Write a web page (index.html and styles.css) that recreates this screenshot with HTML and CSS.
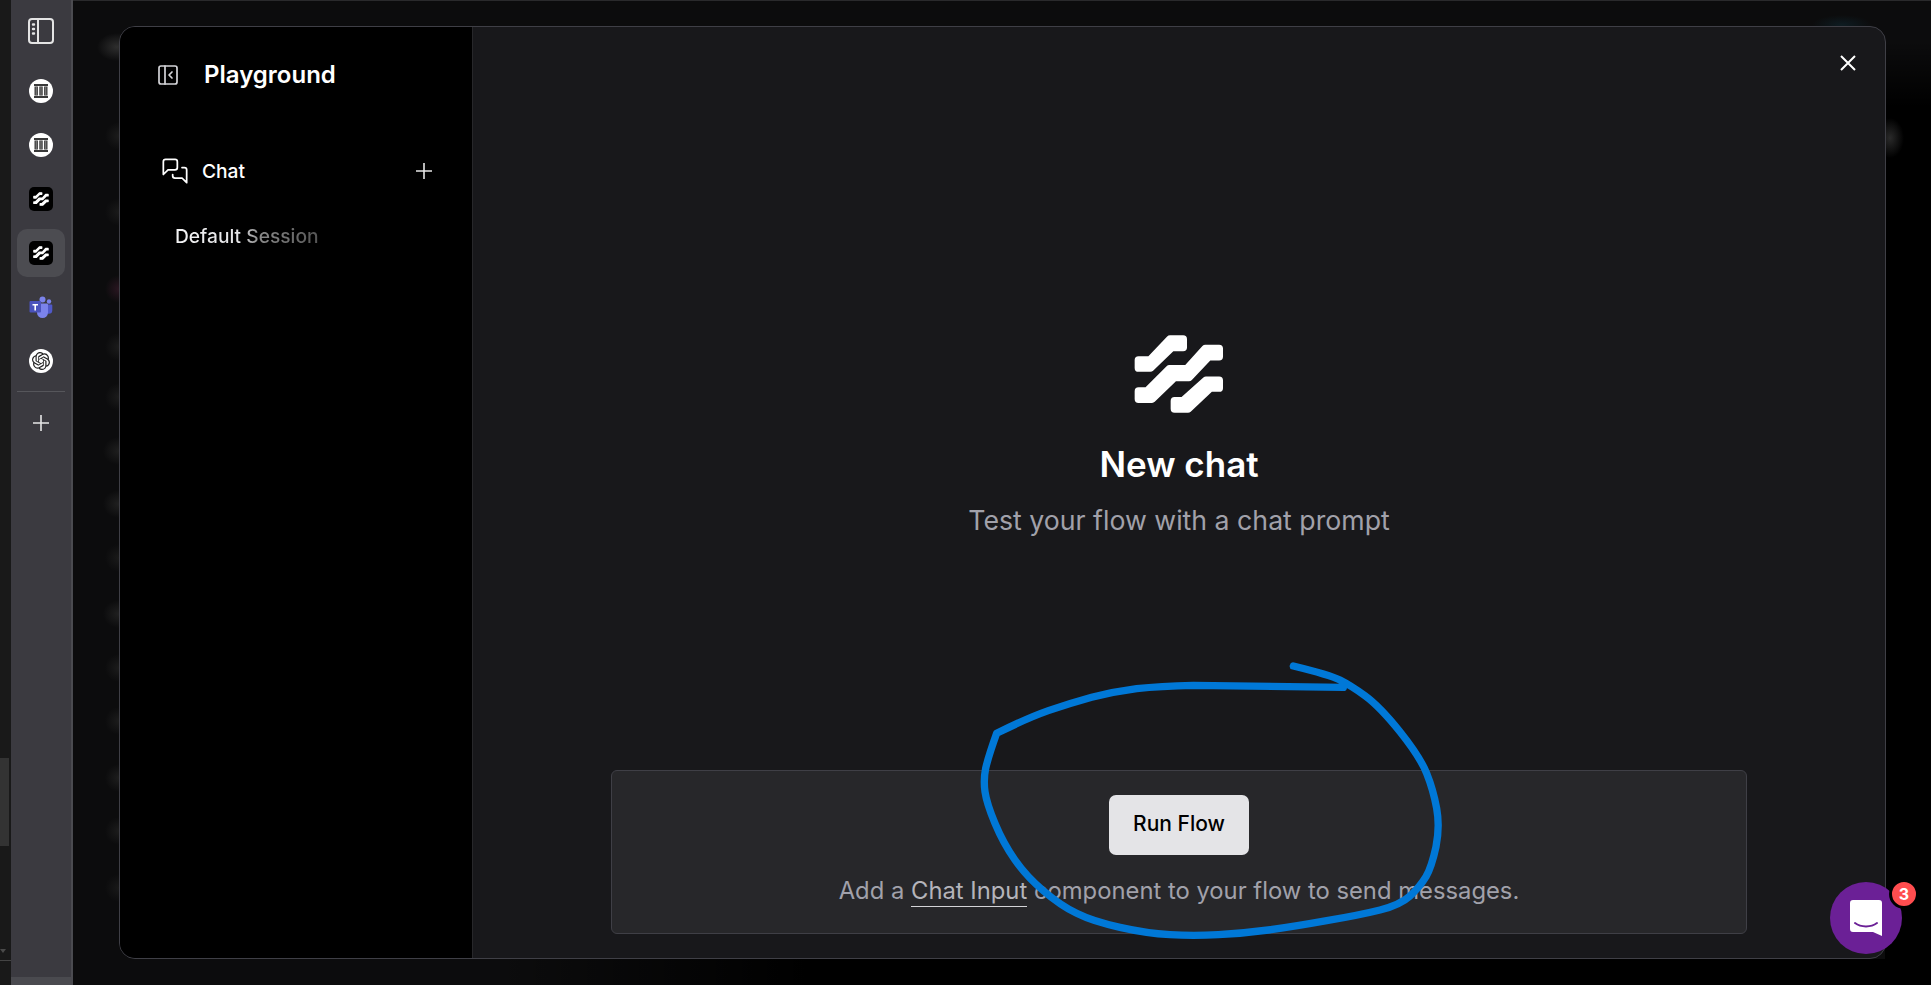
FILE: index.html
```html
<!DOCTYPE html>
<html lang="en">
<head>
<meta charset="utf-8">
<title>Playground</title>
<link rel="stylesheet" href="styles.css">
</head>
<body>
<svg class="defs" width="0" height="0" aria-hidden="true">
  <symbol id="lf" viewBox="160 70 275 243">
    <g fill="currentColor" stroke="currentColor" stroke-width="24" stroke-linejoin="round">
      <polygon points="174,149 209,149 270,85 310,85 310,110 275,110 210,173 174,173"/>
      <polygon points="174,244 200,244 268,176 322,176 378,114 420,114 420,138 388,138 328,202 283,202 215,268 174,268"/>
      <polygon points="284,274 310,274 380,211 420,211 420,234 393,234 325,298 284,298"/>
    </g>
  </symbol>
  <symbol id="cols" viewBox="0 0 24 24">
    <circle cx="12" cy="12" r="12" fill="#fff"/>
    <path fill="#3a3a3a" d="M5 5h14v2H5zM5 17h14v2H5zM5.500 7.500h3.400v9H5.500zM10.300 7.500h3.400v9h-3.400zM15.100 7.500h3.400v9h-3.400z"/>
    <path fill="#9a9a9a" d="M6.800 7.500h.8v9h-.8zM11.600 7.500h.8v9h-.8zM16.400 7.500h.8v9h-.8z"/>
  </symbol>
</svg>

<div class="app">
  <div class="edge">
    <div class="edge-thumb"></div>
    <div class="edge-arrow"></div>
    <div class="edge-line"></div>
  </div>

  <nav class="rail">
    <div class="rail-item rail-toggle">
      <svg class="ic-26" viewBox="0 0 26 26" fill="none" stroke="#e4e4e4" stroke-width="2"><rect x="1" y="1" width="24" height="24" rx="3"/><path d="M10 1v24"/><path stroke-width="2.400" stroke-linecap="round" d="M5 6.500h1M5 11h1M5 15.500h1"/></svg>
    </div>
    <div class="rail-item"><svg class="ic-24"><use href="#cols"/></svg></div>
    <div class="rail-item"><svg class="ic-24"><use href="#cols"/></svg></div>
    <div class="rail-item"><span class="lf-tile"><svg class="lf-mini"><use href="#lf"/></svg></span></div>
    <div class="rail-item rail-item-active"><span class="lf-tile"><svg class="lf-mini"><use href="#lf"/></svg></span></div>
    <div class="rail-item">
      <svg class="ic-24" viewBox="0 0 24 24">
        <circle cx="20" cy="6.500" r="2.200" fill="#7b83eb"/>
        <path fill="#5059c9" d="M16 9.500h6.500a.8.800 0 0 1 .8.800v5a3.500 3.500 0 0 1-3.500 3.500h-3.800z"/>
        <circle cx="13.500" cy="4.500" r="3" fill="#7b83eb"/>
        <path fill="#7b83eb" d="M8 8.500h10a1 1 0 0 1 1 1v8a5.500 5.500 0 0 1-11 0z"/>
        <rect x="0.500" y="6" width="11.500" height="11.500" rx="1" fill="#4b53bc"/>
        <path fill="#fff" d="M3.500 9h5.500v1.400H7v5H5.400v-5H3.500z"/>
      </svg>
    </div>
    <div class="rail-item">
      <span class="oa-tile">
        <svg class="oa-mark" viewBox="0 0 24 24"><path fill="#222" d="M22.2819 9.8211a5.9847 5.9847 0 0 0-.5157-4.9108 6.0462 6.0462 0 0 0-6.5098-2.9A6.0651 6.0651 0 0 0 4.9807 4.1818a5.9847 5.9847 0 0 0-3.9977 2.9 6.0462 6.0462 0 0 0 .7427 7.0966 5.98 5.98 0 0 0 .511 4.9107 6.051 6.051 0 0 0 6.5146 2.9001A5.9847 5.9847 0 0 0 13.2599 24a6.0557 6.0557 0 0 0 5.7718-4.2058 5.9894 5.9894 0 0 0 3.9977-2.9001 6.0557 6.0557 0 0 0-.7475-7.0729zm-9.022 12.6081a4.4755 4.4755 0 0 1-2.8764-1.0408l.1419-.0804 4.7783-2.7582a.7948.7948 0 0 0 .3927-.6813v-6.7369l2.02 1.1686a.071.071 0 0 1 .038.052v5.5826a4.504 4.504 0 0 1-4.4945 4.4944zm-9.6607-4.1254a4.4708 4.4708 0 0 1-.5346-3.0137l.142.0852 4.783 2.7582a.7712.7712 0 0 0 .7806 0l5.8428-3.3685v2.3324a.0804.0804 0 0 1-.0332.0615L9.74 19.9502a4.4992 4.4992 0 0 1-6.1408-1.6464zM2.3408 7.8956a4.485 4.485 0 0 1 2.3655-1.9728V11.6a.7664.7664 0 0 0 .3879.6765l5.8144 3.3543-2.0201 1.1685a.0757.0757 0 0 1-.071 0l-4.8303-2.7865A4.504 4.504 0 0 1 2.3408 7.872zm16.5963 3.8558L13.1038 8.364 15.1192 7.2a.0757.0757 0 0 1 .071 0l4.8303 2.7913a4.4944 4.4944 0 0 1-.6765 8.1042v-5.6772a.79.79 0 0 0-.407-.667zm2.0107-3.0231l-.142-.0852-4.7735-2.7818a.7759.7759 0 0 0-.7854 0L9.409 9.2297V6.8974a.0662.0662 0 0 1 .0284-.0615l4.8303-2.7866a4.4992 4.4992 0 0 1 6.6802 4.66zM8.3065 12.863l-2.02-1.1638a.0804.0804 0 0 1-.038-.0567V6.0742a4.4992 4.4992 0 0 1 7.3757-3.4537l-.142.0805L8.704 5.459a.7948.7948 0 0 0-.3927.6813zm1.0976-2.3654l2.602-1.4998 2.6069 1.4998v2.9994l-2.5974 1.4997-2.6067-1.4997Z"/></svg>
      </span>
    </div>
    <div class="rail-sep"></div>
    <div class="rail-item rail-add">
      <svg class="ic-plus" viewBox="0 0 16 16" stroke="#e6e6e6" stroke-width="1.600"><path d="M8 0v16M0 8h16"/></svg>
    </div>
  </nav>

  <main class="stage">
    <section class="modal">
      <aside class="side">
        <header class="side-head">
          <svg class="ic-panel" viewBox="0 0 24 24" fill="none" stroke="#d4d4d8" stroke-width="1.700" stroke-linecap="round" stroke-linejoin="round"><rect x="3" y="3" width="18" height="18" rx="2"/><path d="M9 3v18"/><path d="m16 15-3-3 3-3"/></svg>
          <h1 class="side-title">Playground</h1>
        </header>
        <div class="side-row">
          <svg class="ic-chat" viewBox="0 0 24 24" fill="none" stroke="#fff" stroke-width="1.500" stroke-linecap="round" stroke-linejoin="round"><path d="M14 9a2 2 0 0 1-2 2H6l-4 4V4a2 2 0 0 1 2-2h8a2 2 0 0 1 2 2z"/><path d="M18 9h2a2 2 0 0 1 2 2v11l-4-4h-6a2 2 0 0 1-2-2v-1"/></svg>
          <span class="side-label">Chat</span>
          <svg class="ic-side-plus" viewBox="0 0 16 16" stroke="#e6e6e6" stroke-width="1.600"><path d="M8 0v16M0 8h16"/></svg>
        </div>
        <div class="side-session"><span class="session-fade">Default Session</span></div>
      </aside>

      <div class="pane">
        <div class="pane-close">
          <svg class="ic-close" viewBox="0 0 16 16" stroke="#fff" stroke-width="2"><path d="M1 1l14 14M15 1L1 15"/></svg>
        </div>
        <div class="empty">
          <svg class="lf-big"><use href="#lf"/></svg>
          <h2 class="empty-title">New chat</h2>
          <p class="empty-sub">Test your flow with a chat prompt</p>
        </div>
        <div class="composer">
          <button class="run-btn">Run Flow</button>
          <p class="composer-hint">Add a <a class="hint-link">Chat Input</a> component to your flow to send messages.</p>
        </div>
      </div>
    </section>
  </main>
</div>

<svg class="scribble" viewBox="0 0 1500 900" fill="none" stroke="#0078d7" stroke-width="22" stroke-linecap="round" stroke-linejoin="round">
  <path d="M1000 48Q1110 75 1140 90Q1170 105 1215 137Q1260 170 1320 245Q1380 320 1400 370Q1420 420 1430 475Q1440 530 1428 590Q1415 650 1398 680Q1380 710 1350 738Q1320 765 1260 780Q1200 795 1100 812Q1000 830 925 840Q850 850 775 854Q700 858 630 854Q560 850 480 832Q400 815 350 790Q300 765 250 722Q200 680 165 630Q130 580 105 520Q80 460 75 425Q70 390 77 355Q85 320 110 250Q200 205 265 182Q330 160 395 142Q460 125 530 116Q600 108 700 106L1150 112"/>
</svg>

<div class="launcher">
  <svg class="launcher-ic" viewBox="0 0 32 36"><path fill="#fff" d="M3 0h26a3 3 0 0 1 3 3v33l-9-4H3a3 3 0 0 1-3-3V3a3 3 0 0 1 3-3z"/><path fill="none" stroke="#6b2096" stroke-width="2" stroke-linecap="round" d="M5 23c6 4.500 16 4.500 22 0"/></svg>
  <span class="launcher-badge">3</span>
</div>
</body>
</html>
```
FILE: styles.css
```css
* { box-sizing: border-box; }
html, body { height: 100%; margin: 0; }
body {
  background: #000;
  color: #fff;
  font-family: Inter, "Liberation Sans", sans-serif;
  overflow: hidden;
}
.defs { position: absolute; }
.app { display: flex; height: 985px; }

.edge {
  width: 11px;
  flex: none;
  background: #191919;
  display: flex;
  flex-direction: column;
  padding-top: 758px;
}
.edge-thumb { width: 9px; height: 88px; background: #333; }
.edge-arrow {
  margin: 103px 0 0 0;
  width: 0;
  height: 0;
  border-left: 3px solid transparent;
  border-right: 3px solid transparent;
  border-top: 4px solid #4a4a4a;
}
.edge-line { margin-top: 7px; height: 1px; background: #444; }

.rail {
  width: 62px;
  flex: none;
  background: #3b3a40;
  border-right: 2px solid #4b4b50;
  border-bottom: 8px solid #4a4a4f;
  display: flex;
  flex-direction: column;
  align-items: center;
  padding: 7px 0 0;
}
.rail-item {
  width: 48px;
  height: 48px;
  flex: none;
  margin-bottom: 6px;
  border-radius: 10px;
  display: flex;
  align-items: center;
  justify-content: center;
}
.rail-toggle { margin-bottom: 12px; }
.rail-item-active { background: #4c4c51; }
.rail-sep { width: 48px; height: 1px; background: #56565b; flex: none; }
.rail-add { margin-top: 7px; }
.ic-24 { width: 24px; height: 24px; display: block; }
.ic-26 { width: 26px; height: 26px; display: block; }
.ic-plus { width: 16px; height: 16px; }
.lf-tile {
  width: 24px;
  height: 24px;
  background: #000;
  border-radius: 5px;
  color: #fff;
  display: flex;
  align-items: center;
  justify-content: center;
}
.lf-mini { width: 16px; height: 14px; }
.oa-tile {
  width: 24px;
  height: 24px;
  background: #fff;
  border-radius: 50%;
  display: flex;
  align-items: center;
  justify-content: center;
}
.oa-mark { width: 18px; height: 18px; }

.stage {
  flex: 1;
  min-width: 0;
  padding: 25px 45px 26px 46px;
  border-top: 1px solid #2a2a2c;
  background:
    radial-gradient(20px 14px at 44px 46px, #2e2e2e, transparent),
    radial-gradient(14px 14px at 46px 135px, #1c1c1c, transparent),
    radial-gradient(14px 14px at 46px 211px, #1a1a1a, transparent),
    radial-gradient(14px 14px at 46px 288px, #2a1621, transparent),
    radial-gradient(14px 14px at 46px 346px, #1c1c1c, transparent),
    radial-gradient(14px 14px at 46px 396px, #1c1c1c, transparent),
    radial-gradient(16px 14px at 46px 450px, #1f1f1f, transparent),
    radial-gradient(16px 14px at 46px 503px, #202020, transparent),
    radial-gradient(14px 14px at 46px 557px, #1a1a1a, transparent),
    radial-gradient(16px 14px at 46px 613px, #202020, transparent),
    radial-gradient(14px 14px at 46px 667px, #1c1c1c, transparent),
    radial-gradient(14px 14px at 46px 720px, #1c1c1c, transparent),
    radial-gradient(14px 14px at 46px 777px, #1e1e1e, transparent),
    radial-gradient(14px 14px at 46px 830px, #1c1c1c, transparent),
    radial-gradient(14px 14px at 46px 887px, #191919, transparent),
    radial-gradient(30px 10px at 1769px 24px, #0e1c22, transparent),
    radial-gradient(14px 20px at 1817px 137px, #2a2a2a, transparent),
    linear-gradient(180deg, transparent 40px, #000 105px) right top / 46px 100% no-repeat,
    linear-gradient(90deg, transparent 424px, #000 733px) left bottom / 100% 26px no-repeat,
    #0c0c0d;
}
.modal {
  height: 100%;
  display: flex;
  border: 1px solid #3f3f46;
  border-radius: 16px;
  background: #18181b;
  overflow: hidden;
}

.side {
  width: 353px;
  flex: none;
  background: #000;
  border-right: 1px solid #27272a;
  padding: 24px 0 0 38px;
}
.side-head { display: flex; align-items: center; gap: 24px; height: 48px; margin-left: -2px; }
.ic-panel { width: 24px; height: 24px; flex: none; }
.side-title { margin: 0; font-size: 24px; font-weight: 600; line-height: 32px; }
.side-row {
  display: flex;
  align-items: center;
  margin-top: 50px;
  height: 44px;
  padding-right: 40px;
}
.ic-chat { width: 28px; height: 28px; flex: none; margin-left: 3px; }
.side-label { margin-left: 13px; margin-top: -1px; font-size: 19.200px; font-weight: 500; flex: 1; }
.ic-side-plus { width: 16px; height: 16px; flex: none; }
.side-session { margin-top: 21px; padding-left: 17px; height: 44px; line-height: 44px; font-size: 19.200px; font-weight: 500; }
.session-fade {
  background: linear-gradient(90deg, #f4f4f5 0, #e4e4e7 45%, #8a8a8a 58%, #555 100%);
  -webkit-background-clip: text;
  background-clip: text;
  color: transparent;
}

.pane { flex: 1; min-width: 0; position: relative; display: flex; flex-direction: column; align-items: center; padding: 0 138px 24px; }
.pane-close { position: absolute; top: 28px; right: 29px; line-height: 0; }
.ic-close { width: 16px; height: 16px; }
.empty { flex: 1; display: flex; flex-direction: column; align-items: center; padding-top: 307px; }
.lf-big { width: 90px; height: 80px; color: #fff; display: block; }
.empty-title { margin: 26px 0 0; font-size: 35px; line-height: 48px; font-weight: 600; }
.empty-sub { margin: 16px 0 0; font-size: 26.700px; line-height: 32px; color: #a1a1aa; }
.composer {
  width: 100%;
  height: 164px;
  flex: none;
  border: 1px solid #3f3f46;
  border-radius: 6px;
  background: #27272a;
  display: flex;
  flex-direction: column;
  align-items: center;
  padding-top: 24px;
}
.run-btn {
  width: 140px;
  height: 60px;
  border: 0;
  border-radius: 7px;
  background: #e4e4e7;
  color: #000;
  font: 500 21px/24px Inter, "Liberation Sans", sans-serif;
  padding: 0 0 2px;
}
.composer-hint { margin: 20px 0 0; font-size: 23.800px; line-height: 32px; color: #a1a1aa; }
.hint-link { color: #b4b4bb; border-bottom: 1px solid #d4d4d8; padding-bottom: 1px; }

.scribble { position: absolute; left: 960px; top: 650px; width: 500px; height: 300px; }

.launcher {
  position: absolute;
  left: 1830px;
  top: 882px;
  width: 72px;
  height: 72px;
  border-radius: 50%;
  background: #6b2096;
  display: flex;
  align-items: center;
  justify-content: center;
}
.launcher-ic { width: 32px; height: 36px; }
.launcher-badge {
  position: absolute;
  left: 59px;
  top: -3px;
  width: 30px;
  height: 30px;
  border: 3px solid #000;
  border-radius: 50%;
  background: #ff4d4f;
  color: #fff;
  font-size: 16px;
  font-weight: 700;
  display: flex;
  align-items: center;
  justify-content: center;
}
```
